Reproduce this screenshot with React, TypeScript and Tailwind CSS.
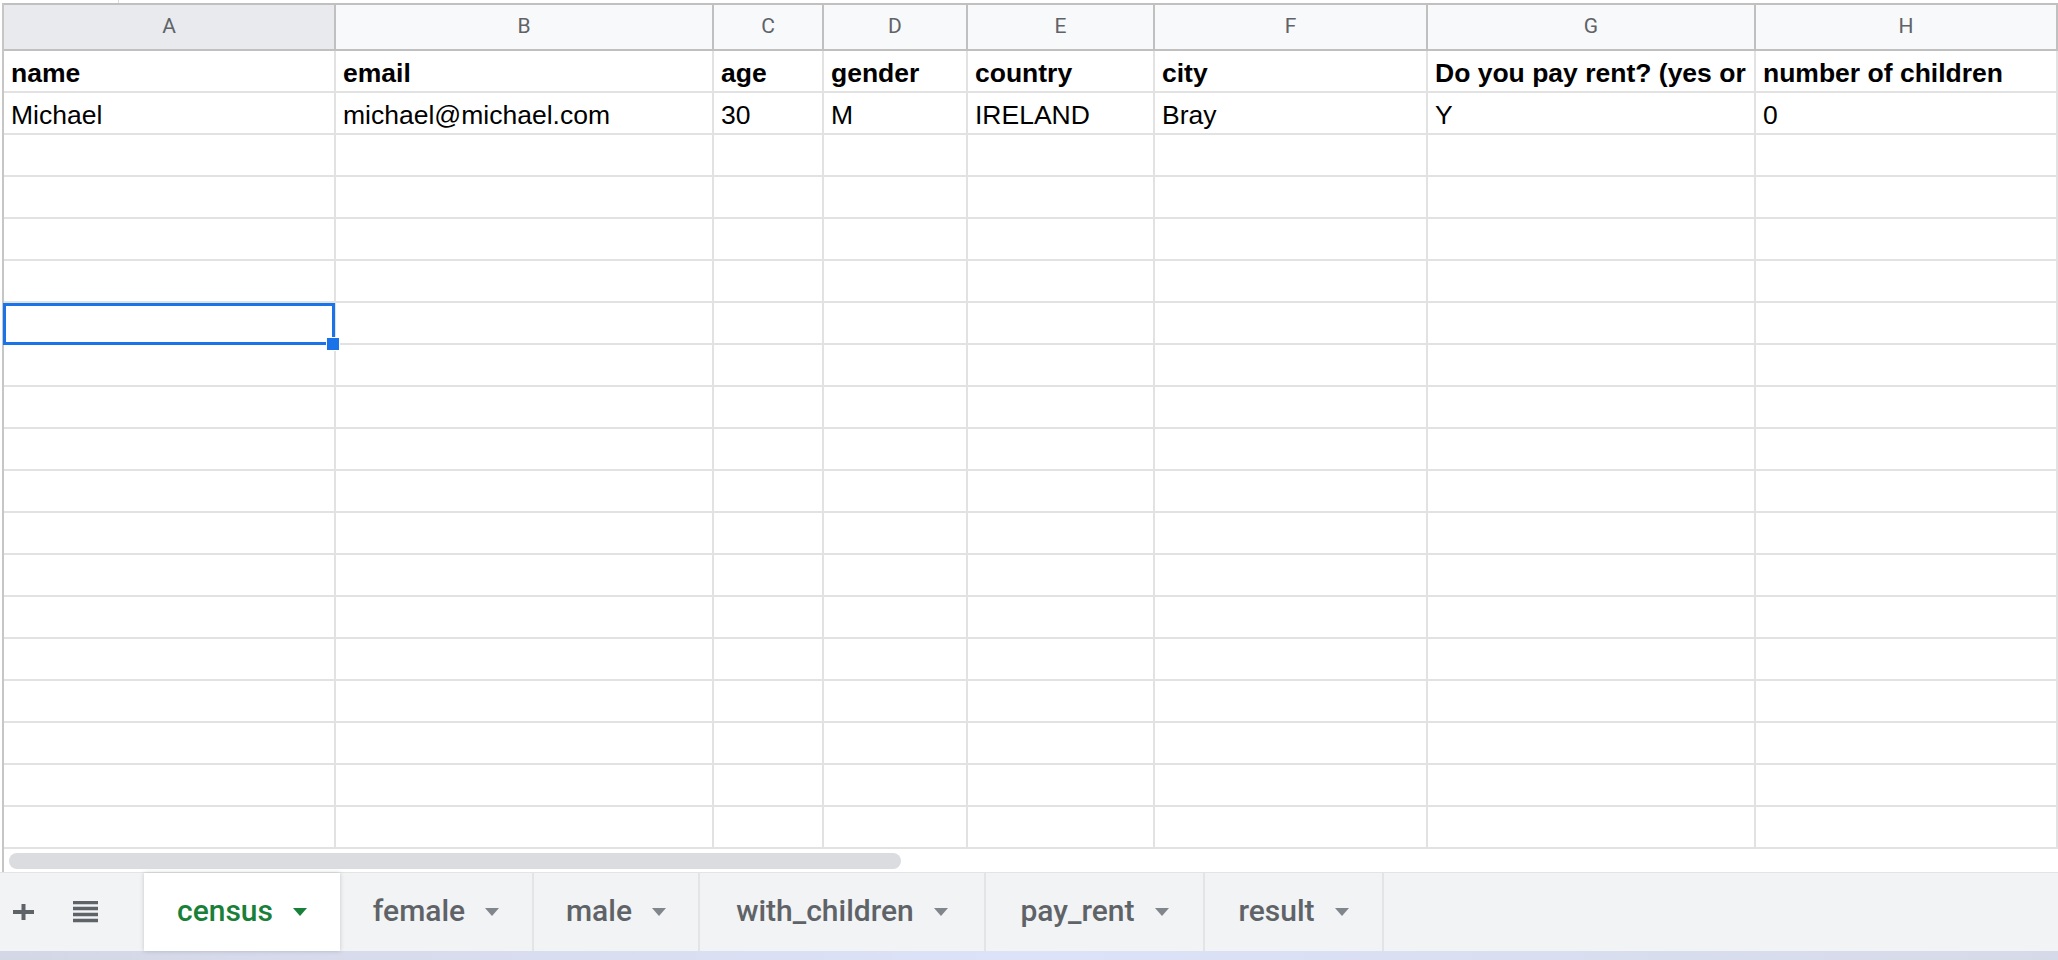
const columns = [
  { label: 'A', cls: 'w-[332px] bg-[#e8eaed]' },
  { label: 'B', cls: 'w-[378px] bg-[#f8f9fa]' },
  { label: 'C', cls: 'w-[110px] bg-[#f8f9fa]' },
  { label: 'D', cls: 'w-[144px] bg-[#f8f9fa]' },
  { label: 'E', cls: 'w-[187px] bg-[#f8f9fa]' },
  { label: 'F', cls: 'w-[273px] bg-[#f8f9fa]' },
  { label: 'G', cls: 'w-[328px] bg-[#f8f9fa]' },
  { label: 'H', cls: 'w-[302px] bg-[#f8f9fa]' },
];

const widths = [
  'w-[332px]',
  'w-[378px]',
  'w-[110px]',
  'w-[144px]',
  'w-[187px]',
  'w-[273px]',
  'w-[328px]',
  'w-[302px]',
];

// G1 is clipped by the cell in the sheet, so only the visible part is kept
const rows: string[][] = [
  ['name', 'email', 'age', 'gender', 'country', 'city', 'Do you pay rent? (yes or', 'number of children'],
  ['Michael', 'michael@michael.com', '30', 'M', 'IRELAND', 'Bray', 'Y', '0'],
];

const ROW_COUNT = 19;
const SELECTED_ROW = 6;

const tabs = [
  { name: 'census', cls: 'w-[196px]', active: true },
  { name: 'female', cls: 'w-[194px]' },
  { name: 'male', cls: 'w-[166px]' },
  { name: 'with_children', cls: 'w-[286px]' },
  { name: 'pay_rent', cls: 'w-[219px]' },
  { name: 'result', cls: 'w-[179px]' },
];

function Caret({ active }: { active?: boolean }) {
  return (
    <svg width="14" height="8" viewBox="0 0 14 8" className="shrink-0">
      <path d="M0 0h14L7 8z" fill={active ? '#188038' : '#80868b'} />
    </svg>
  );
}

function Cell({ text, width, bold, selected }: { text: string; width: string; bold: boolean; selected: boolean }) {
  return (
    <div className={`${width} relative shrink-0 h-full border-r-2 border-[#e2e2e2]`}>
      <div
        className={`h-full flex items-end pl-[7px] pb-[5px] overflow-hidden whitespace-nowrap text-[26.5px] leading-none text-black ${bold ? 'font-bold' : ''}`}
      >
        {text}
      </div>
      {selected && (
        <div className="absolute -left-[1px] top-0 -right-[1px] -bottom-[2px] border-[3px] border-[#1a73e8] z-10">
          <div className="absolute -right-[8px] -bottom-[9px] w-[14px] h-[14px] bg-[#1a73e8] border border-white" />
        </div>
      )}
    </div>
  );
}

export default function App() {
  return (
    <div className="w-[2058px] h-[960px] overflow-hidden bg-white flex flex-col font-['Liberation_Sans',Arial,sans-serif]">
      {/* toolbar remnant */}
      <div className="h-[3px] flex shrink-0">
        <div className="w-[118px]" />
        <div className="w-px bg-[#dadce0]" />
      </div>

      {/* grid */}
      <div className="ml-[2px] border-l-2 border-[#c6c6c6] flex flex-col shrink-0">
        <div className="h-[48px] flex border-t-2 border-b-2 border-[#c0c0c0]">
          {columns.map((c) => (
            <div
              key={c.label}
              className={`${c.cls} shrink-0 h-full border-r-2 border-[#c0c0c0] flex items-center justify-center font-['Roboto',sans-serif] text-[21px] text-[#5f6368]`}
            >
              {c.label}
            </div>
          ))}
        </div>
        {Array.from({ length: ROW_COUNT }).map((_, r) => (
          <div key={r} className="h-[42px] flex border-b-2 border-[#e2e2e2]">
            {widths.map((w, c) => (
              <Cell
                key={c}
                width={w}
                text={rows[r]?.[c] ?? ''}
                bold={r === 0}
                selected={r === SELECTED_ROW && c === 0}
              />
            ))}
          </div>
        ))}
      </div>

      {/* horizontal scrollbar */}
      <div className="h-[23px] shrink-0 flex items-center pl-[5px] ml-[2px] border-l-2 border-[#c6c6c6]">
        <div className="w-[892px] h-[16px] rounded-full bg-[#dadce0]" />
      </div>

      {/* sheet tabs */}
      <div className="h-[79px] shrink-0 flex bg-[#f1f3f4] border-t border-[#e3e4e6] font-['Roboto',sans-serif]">
        <div className="w-[144px] shrink-0 flex items-center">
          <svg width="21" height="16" viewBox="0 0 21 16" className="ml-[13px]">
            <path d="M10.5 0v16M0 8h21" stroke="#5f6368" strokeWidth="4" />
          </svg>
          <svg width="25" height="22" viewBox="0 0 25 22" className="ml-[39px]">
            <path d="M0 1.5h25M0 7.5h25M0 13.5h25M0 19.5h25" stroke="#5f6368" strokeWidth="3.5" />
          </svg>
        </div>
        {tabs.map((t) => (
          <div
            key={t.name}
            className={`${t.cls} shrink-0 flex items-center justify-center gap-[20px] text-[30px] font-medium ${
              t.active
                ? 'bg-white text-[#188038] shadow-[0_0_4px_rgba(60,64,67,0.25)] z-10'
                : 'text-[#5f6368] border-r-2 border-[#e3e4e6]'
            }`}
          >
            <span className="leading-none pb-[2px]">{t.name}</span>
            <Caret active={t.active} />
          </div>
        ))}
      </div>

      {/* desktop edge */}
      <div className="flex-1 bg-gradient-to-r from-[#d4d7e5] via-[#dce2f8] to-[#d6dae8]" />
    </div>
  );
}
